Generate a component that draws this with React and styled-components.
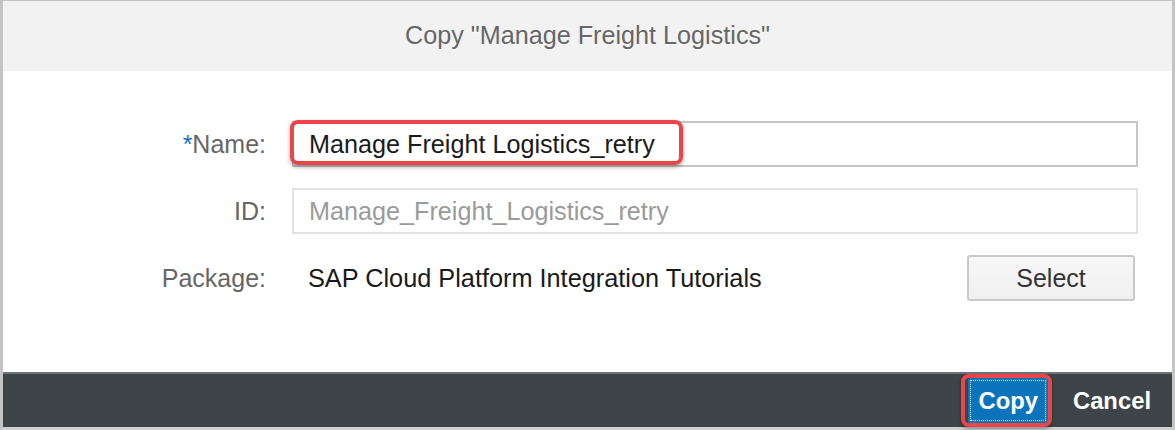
import styled, { createGlobalStyle } from 'styled-components'

const GlobalStyle = createGlobalStyle`
    html, body {
        margin: 0;
        padding: 0;
        background: #ffffff;
    }
    body {
        font-family: "Liberation Sans", Arial, sans-serif;
    }
`

const Dialog = styled.div`
    width: 1175px;
    height: 430px;
    box-sizing: border-box;
    border-top: 1px solid #c4c4c4;
    border-left: 3px solid #c4c4c4;
    border-right: 3px solid #c4c4c4;
    border-bottom: 3px solid #d0d0d0;
    display: flex;
    flex-direction: column;
    background: #ffffff;
`

const Header = styled.div`
    height: 70px;
    flex-shrink: 0;
    background: #f2f2f2;
    display: flex;
    align-items: center;
    justify-content: center;
    font-size: 25.2px;
    color: #666666;
    text-shadow: 0 1px 0 #ffffff;
    padding-bottom: 2px;
    box-sizing: border-box;
`

const Body = styled.div`
    flex: 1;
    padding: 50px 34px 0 0;
    display: grid;
    grid-template-columns: 263px 1fr;
    grid-auto-rows: 46px;
    column-gap: 26px;
    row-gap: 21px;
    align-content: start;
`

const Label = styled.label`
    display: flex;
    align-items: center;
    justify-content: flex-end;
    font-size: 25px;
    color: #666666;
`

const Required = styled.span`
    color: #1a73b8;
`

const InputWrap = styled.div`
    position: relative;
`

const Input = styled.div`
    height: 100%;
    box-sizing: border-box;
    border: 2px solid ${({ $muted }) => ($muted ? '#e2e2e2' : '#c6c6c6')};
    display: flex;
    align-items: center;
    padding-left: 15px;
    font-size: 25.2px;
    color: ${({ $muted }) => ($muted ? '#9a9a9a' : '#1a1a1a')};
`

const Highlight = styled.span`
    position: absolute;
    left: ${({ $x }) => $x}px;
    top: ${({ $y }) => $y}px;
    width: ${({ $w }) => $w}px;
    height: ${({ $h }) => $h}px;
    box-sizing: border-box;
    border: 4px solid #ec4449;
    border-radius: 8px;
    box-shadow: 0 2px 4px rgba(0, 0, 0, 0.35);
    pointer-events: none;
`

const PackageRow = styled.div`
    display: flex;
    align-items: center;
    justify-content: space-between;
    padding-left: 16px;
    padding-right: 3px;
    font-size: 25.3px;
    color: #1a1a1a;
`

const SelectButton = styled.button`
    width: 168px;
    height: 46px;
    border: 2px solid #c9c9c9;
    border-radius: 3px;
    background: linear-gradient(#f7f7f7, #f0f0f0);
    font-family: inherit;
    font-size: 25px;
    color: #333333;
    padding: 0;
`

const Footer = styled.div`
    height: 55px;
    flex-shrink: 0;
    box-sizing: border-box;
    background: #3e4548;
    border-top: 2px solid #6f7577;
    display: flex;
    align-items: center;
    justify-content: flex-end;
    gap: 15px;
    padding-right: 11px;
`

const FooterButton = styled.button`
    position: relative;
    height: 45px;
    padding: 0 10px;
    border: none;
    border-radius: 2px;
    font-family: inherit;
    font-weight: bold;
    font-size: 23.8px;
    color: #ffffff;
    background: ${({ $primary }) => ($primary ? '#0b74bd' : 'transparent')};
    outline: ${({ $primary }) => ($primary ? '1px dotted #ffffff' : 'none')};
    outline-offset: -3px;
`

const App = () => {
    return (
        <>
            <GlobalStyle />
            <Dialog>
                <Header>Copy "Manage Freight Logistics"</Header>
                <Body>
                    <Label><Required>*</Required>Name:</Label>
                    <InputWrap>
                        <Input>Manage Freight Logistics_retry</Input>
                        <Highlight $x={-2} $y={-1} $w={393} $h={45} />
                    </InputWrap>
                    <Label>ID:</Label>
                    <Input $muted>Manage_Freight_Logistics_retry</Input>
                    <Label>Package:</Label>
                    <PackageRow>
                        SAP Cloud Platform Integration Tutorials
                        <SelectButton>Select</SelectButton>
                    </PackageRow>
                </Body>
                <Footer>
                    <FooterButton $primary>
                        Copy
                        <Highlight $x={-7} $y={-4} $w={91} $h={53} />
                    </FooterButton>
                    <FooterButton>Cancel</FooterButton>
                </Footer>
            </Dialog>
        </>
    )
}

export default App
